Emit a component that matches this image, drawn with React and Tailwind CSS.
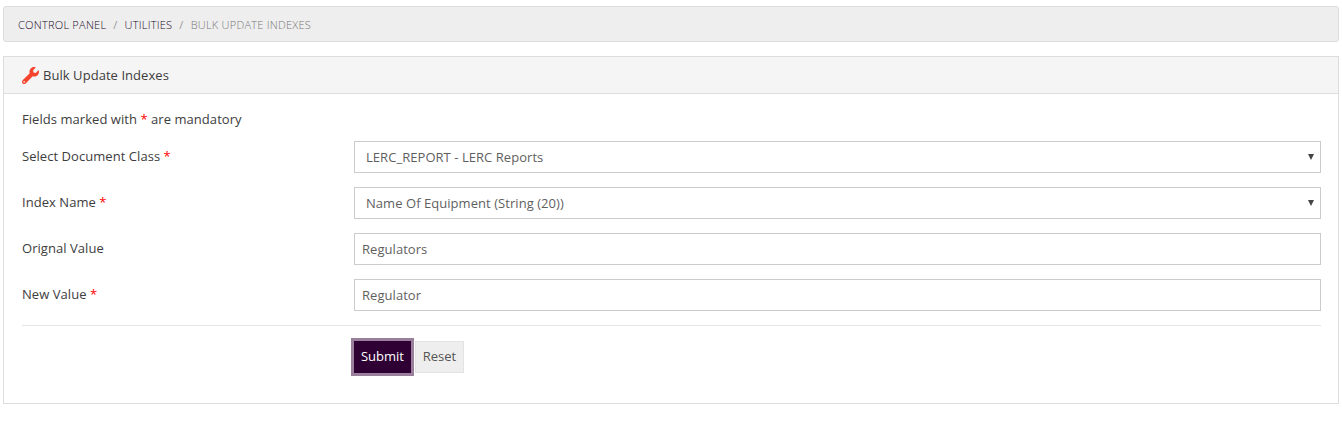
import { FaWrench } from "react-icons/fa";

const fields = [
  { label: "Select Document Class", required: true, value: "LERC_REPORT - LERC Reports", select: true },
  { label: "Index Name", required: true, value: "Name Of Equipment (String (20))", select: true },
  { label: "Orignal Value", value: "Regulators" },
  { label: "New Value", required: true, value: "Regulator" },
];

function Field({ label, required, value, select }) {
  return (
    <div className="flex h-8 items-start">
      <label className="w-[332px] shrink-0 pt-[6px] text-[13px] leading-[18px] tracking-[0.05px] text-[#3d3d3d]">
        {label} {required && <span className="text-[#f00]">*</span>}
      </label>
      {select ? (
        <div className="relative flex-1">
          <select
            defaultValue={value}
            className="h-8 w-full appearance-none rounded-none border border-[#ccc] bg-white pl-[11px] pt-[1px] text-[13px] tracking-[0.05px] text-[#5f5f5f] outline-none"
          >
            <option>{value}</option>
          </select>
          <svg viewBox="0 0 6 6" className="pointer-events-none absolute right-[7px] top-[13px] h-[6px] w-[6px] fill-[#444]">
            <path d="M0 0h6L3 6z" />
          </svg>
        </div>
      ) : (
        <input
          readOnly
          value={value}
          className="h-8 flex-1 rounded-none border border-[#ccc] bg-white px-[7px] text-[13px] tracking-[0.05px] text-[#5f5f5f] outline-none"
        />
      )}
    </div>
  );
}

export default function App() {
  return (
    <div className="min-h-screen bg-white px-[3px] pt-[6px] font-['Open_Sans',sans-serif]">
      <nav className="flex h-9 items-center gap-[7px] rounded-[3px] border border-[#ddd] bg-[#eee] pl-[14px] pt-[2px] text-[11px] uppercase tracking-[0.25px]">
        <a className="font-light text-[#1a0a2a]">Control Panel</a>
        <span className="text-[#999]">/</span>
        <a className="font-light text-[#1a0a2a]">Utilities</a>
        <span className="text-[#999]">/</span>
        <span className="font-light text-[#777]">Bulk Update Indexes</span>
      </nav>

      <section className="mt-[14px] h-[348px] border border-[#ddd] bg-white">
        <header className="flex h-[37px] items-center gap-1 border-b border-[#ddd] bg-[#f5f5f5] pl-[18px]">
          <FaWrench className="h-[17px] w-[17px] text-[#f4442e]" />
          <h1 className="pt-[1px] text-[13px] font-normal tracking-[0.05px] text-[#3d3d3d]">Bulk Update Indexes</h1>
        </header>

        <div className="pl-[18px] pr-[17px] pt-4">
          <p className="text-[13px] leading-[18px] tracking-[0.05px] text-[#3d3d3d]">
            Fields marked with <span className="text-[#f00]">*</span> are mandatory
          </p>
          <div className="mt-[13px] flex flex-col gap-[14px]">
            {fields.map((f) => (
              <Field key={f.label} {...f} />
            ))}
          </div>
          <hr className="mt-[14px] border-[#e5e5e5]" />
          <div className="mt-[12px] flex items-center gap-[1px] pl-[329px]">
            <button className="h-[38px] w-[63px] border-[3px] border-[#9a7f9c] bg-[#2e0033] text-[13px] text-white">
              Submit
            </button>
            <button className="h-8 w-[49px] border border-[#e3e3e3] bg-[#eee] text-[13px] text-[#555]">
              Reset
            </button>
          </div>
        </div>
      </section>
    </div>
  );
}
